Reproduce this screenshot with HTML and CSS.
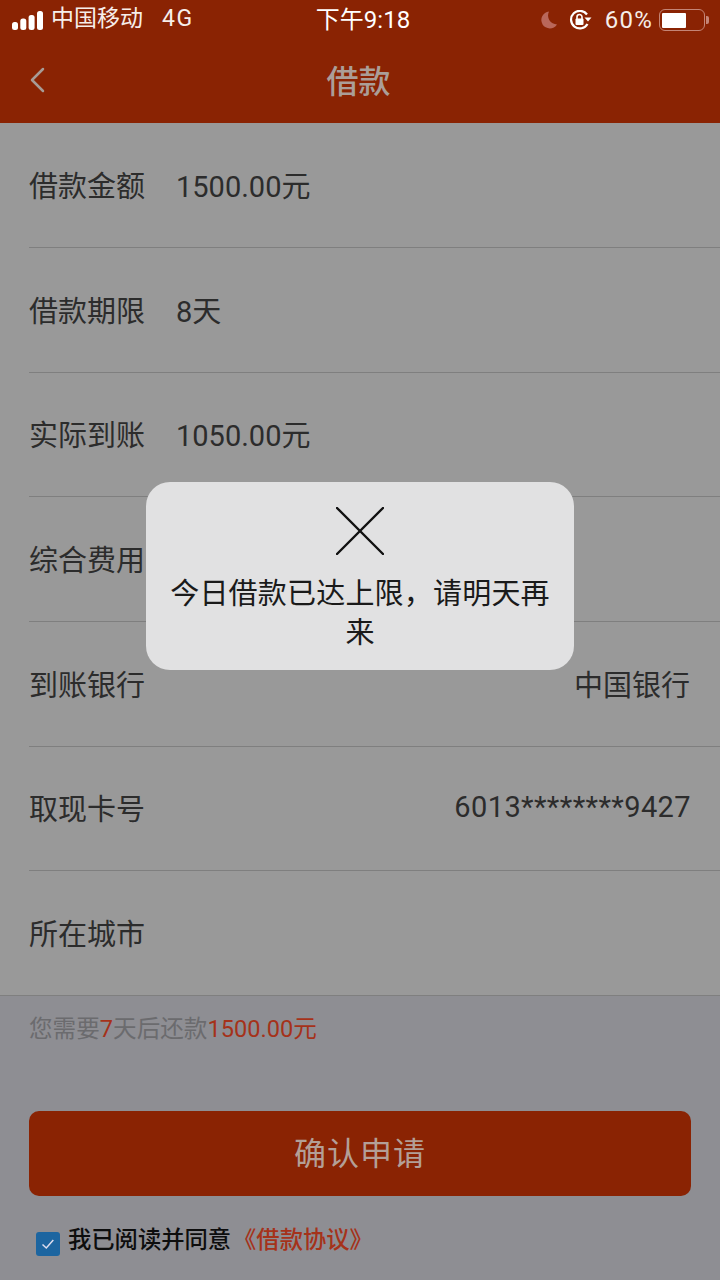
FILE: index.html
```html
<!DOCTYPE html>
<html lang="zh">
<head>
<meta charset="utf-8">
<title>借款</title>
<link rel="stylesheet" href="styles.css">
</head>
<body>
<div class="page">
  <header class="top">
    <div class="status">
      <div class="status-left">
        <svg class="signal" width="31" height="19" viewBox="0 0 31 19"><rect x="0" y="11" width="6" height="8" rx="2.500"/><rect x="8.300" y="7.500" width="6" height="11.500" rx="2.500"/><rect x="16.600" y="4" width="6" height="15" rx="2.500"/><rect x="25" y="0" width="6" height="19" rx="2.500"/></svg>
        <span class="carrier">中国移动</span>
        <span class="net">4G</span>
      </div>
      <div class="clock">下午9:18</div>
      <div class="status-right">
        <svg class="moon" width="18" height="18" viewBox="0 0 18 18"><path d="M10 .5A8.500 8.500 0 1 0 18 13.500 9 9 0 0 1 10 .5z"/></svg>
        <svg class="lock" width="24" height="20" viewBox="0 0 24 20"><path class="ring" d="M18 4.500A8.800 8.800 0 1 0 18.500 14"/><path class="arrow" d="M15.500 7.500h7l-3.500 4z"/><rect class="body" x="6.500" y="8.500" width="8" height="6.500" rx="1"/><path class="ring thin" d="M8 9V7a2.500 2.500 0 0 1 5 0v2"/></svg>
        <span class="pct">60%</span>
        <div class="battery"><div class="battery-fill"></div></div>
        <div class="battery-cap"></div>
      </div>
    </div>
    <div class="nav">
      <svg class="back" width="16" height="26" viewBox="0 0 16 26"><path d="M14 2L3 13l11 11"/></svg>
      <h1 class="title">借款</h1>
    </div>
  </header>

  <main class="rows">
    <div class="row"><span class="label">借款金额</span><span class="value">1500.00元</span></div>
    <div class="row"><span class="label">借款期限</span><span class="value">8天</span></div>
    <div class="row"><span class="label">实际到账</span><span class="value">1050.00元</span></div>
    <div class="row"><span class="label">综合费用</span></div>
    <div class="row"><span class="label">到账银行</span><span class="value end">中国银行</span></div>
    <div class="row"><span class="label">取现卡号</span><span class="value end card">6013********9427</span></div>
    <div class="row last"><span class="label">所在城市</span></div>
  </main>

  <section class="foot">
    <p class="hint">您需要<em>7</em>天后还款<em>1500.00元</em></p>
    <button class="confirm" type="button">确认申请</button>
    <div class="agree">
      <span class="check"><svg width="14" height="12" viewBox="0 0 14 12"><path d="M1.500 6.500l3.800 3.500 7-8"/></svg></span>
      <span class="agree-text">我已阅读并同意</span><span class="agree-link">《借款协议》</span>
    </div>
  </section>

  <div class="toast">
    <svg class="x" width="48" height="48" viewBox="0 0 48 48"><path d="M1 1l46 46M47 1L1 47"/></svg>
    <p class="toast-text">今日借款已达上限，请明天再来</p>
  </div>
</div>
</body>
</html>
```
FILE: styles.css
```css
* { box-sizing: border-box; }
html, body { margin: 0; padding: 0; }
body {
  width: 720px;
  height: 1280px;
  overflow: hidden;
  font-family: Roboto, "Noto Sans CJK SC", sans-serif;
  background: #8e8e93;
}
.page { position: relative; width: 720px; height: 1280px; display: flex; flex-direction: column; }

.top { background: #8a2303; height: 123.330px; flex: none; display: flex; flex-direction: column; }
.status { height: 40px; flex: none; padding: 0 12px; display: flex; align-items: center; justify-content: space-between; position: relative; color: #f6eeea; }
.status-left { display: flex; align-items: center; }
.signal { fill: #fff; margin-right: 8px; }
.carrier { font-size: 23px; line-height: 40px; height: 40px; margin-top: -2px; }
.net { font-size: 23px; line-height: 40px; height: 40px; margin-left: 19px; margin-top: -2px; letter-spacing: 1.500px; }
.clock { position: absolute; left: 0; right: 0; padding-left: 6px; text-align: center; font-size: 24px; line-height: 40px; color: #fff; }
.status-right { display: flex; align-items: center; margin-right: -1px; }
.moon { fill: #b9675a; margin-right: 12px; }
.lock { margin-right: 12px; }
.lock .ring { fill: none; stroke: #fff; stroke-width: 2.200; }
.lock .thin { stroke-width: 1.600; }
.lock .arrow, .lock .body { fill: #fff; }
.pct { font-size: 24px; letter-spacing: 1.200px; margin-right: 6px; }
.battery { width: 46px; height: 22px; border: 1.500px solid #c48576; border-radius: 6px; padding: 2.500px 2px; }
.battery-fill { width: 24px; height: 100%; background: #fff; border-radius: 1px; }
.battery-cap { width: 3px; height: 8px; margin-left: 1px; background: #c48576; border-radius: 0 2px 2px 0; }

.nav { flex: 1; display: flex; align-items: center; justify-content: center; position: relative; padding-right: 3px; }
.back { position: absolute; left: 29px; top: 27px; fill: none; stroke: #a79b96; stroke-width: 2.500; stroke-linecap: round; stroke-linejoin: round; }
.title { margin: 0; font-size: 32px; font-weight: 500; color: #ab9e98; line-height: 1; }

.rows { background: #999999; display: flex; flex-direction: column; flex: none; }
.row {
  height: 124.670px;
  margin-left: 29px;
  padding-right: 30px;
  padding-bottom: 2px;
  border-bottom: 1px solid #7f7f7f;
  display: flex;
  align-items: center;
  font-size: 29px;
  color: #2c2c2c;
}
.row.last { margin-left: 0; padding-left: 29px; }
.label { width: 147px; flex: none; }
.value { flex: 1; }
.value.end { text-align: right; }
.value.card { letter-spacing: .4px; margin-right: -1px; }

.foot { flex: 1; padding: 0 29px; background: #8e8e93; }
.hint { margin: 19px 0 0; font-size: 23.600px; line-height: 28px; color: #6b6b6e; }
.hint em { font-style: normal; color: #a5321a; }
.confirm {
  display: block;
  width: 662px;
  height: 85px;
  margin: 68px 0 0;
  padding: 0 0 4px;
  border: 0;
  border-radius: 10px;
  background: #8a2303;
  color: #b39f97;
  font: 32px Roboto, "Noto Sans CJK SC", sans-serif;
  letter-spacing: 1px;
}
.agree { display: flex; align-items: flex-start; margin-top: 29px; padding-left: 7px; font-size: 23.300px; line-height: 30px; }
.check { width: 24px; height: 24px; margin: 7px 8px 0 0; border-radius: 3px; background: #1c65a0; display: flex; align-items: center; justify-content: center; }
.check svg { fill: none; stroke: #dde; stroke-width: 1.500; }
.agree-text { color: #0d0d0d; font-weight: 500; }
.agree-link { color: #a5321a; margin-left: 2px; font-weight: 500; }

.toast {
  position: absolute;
  left: 146px;
  top: 482px;
  width: 428px;
  height: 188px;
  padding: 25px 20px 0;
  background: #e1e1e2;
  border-radius: 24px;
  display: flex;
  flex-direction: column;
  align-items: center;
}
.x { fill: none; stroke: #111; stroke-width: 2.400; stroke-linecap: round; flex: none; }
.toast-text { margin: 20px 0 0; font-size: 29px; letter-spacing: .2px; line-height: 39px; color: #1a1a1a; text-align: center; width: 388px; }
```
